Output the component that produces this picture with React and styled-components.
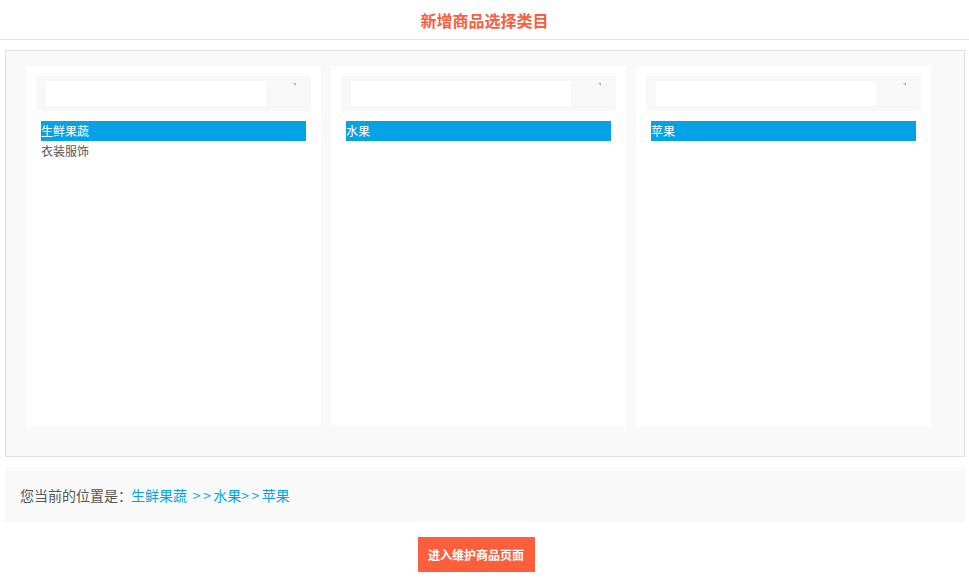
import React, { useState } from "react";
import styled, { createGlobalStyle } from "styled-components";

const GlobalStyle = createGlobalStyle`
  html, body {
    margin: 0;
    padding: 0;
    background: #fff;
    font-family: "Noto Sans CJK SC", "Noto Sans", sans-serif;
  }
`;

const Header = styled.div`
  height: 39px;
  border-bottom: 1px solid #e3e3e3;
  display: flex;
  align-items: center;
  justify-content: center;
`;

const Title = styled.h1`
  margin: 0;
  font-size: 16px;
  font-weight: bold;
  color: #fc5d3d;
`;

const Page = styled.div`
  padding: 10px 4px 0 5px;
`;

const Board = styled.div`
  border: 1px solid #e2e2e2;
  background: #f9f9f9;
  height: 407px;
  box-sizing: border-box;
  padding: 15px 0 0 20px;
  display: flex;
  gap: 10px;
`;

const Column = styled.div`
  width: 295px;
  height: 360px;
  background: #fff;
  padding: 10px;
  box-sizing: border-box;
`;

const SearchBar = styled.div`
  height: 35px;
  background: #f8f8f8;
  display: flex;
  align-items: flex-start;
  padding: 5px 0 0 10px;
  box-sizing: border-box;
  position: relative;
`;

const SearchInput = styled.div`
  width: 220px;
  height: 25px;
  background: #fff;
`;

const Arrow = styled.svg`
  position: absolute;
  left: 257px;
  top: 7px;
`;

const List = styled.ul`
  list-style: none;
  margin: 10px 5px 0;
  padding: 0;
`;

const Item = styled.li`
  height: 20px;
  line-height: 20px;
  font-size: 12px;
  color: ${(p) => (p.$active ? "#fff" : "#555")};
  background: ${(p) => (p.$active ? "#05a3e5" : "transparent")};
  cursor: pointer;
`;

const Location = styled.div`
  margin-top: 10px;
  height: 55px;
  background: #f9f9f9;
  display: flex;
  align-items: center;
  padding-left: 15px;
  font-size: 14px;
  color: #555;
`;

const Path = styled.span`
  color: #05a3e5;
  margin-left: -1px;
`;

const Sep = styled.span`
  letter-spacing: 2.5px;
`;

const Footer = styled.div`
  display: flex;
  justify-content: center;
  padding: 15px 18px 0 0;
`;

const Button = styled.button`
  width: 117px;
  height: 35px;
  border: none;
  background: #fd5f3d;
  color: #fff;
  font-family: inherit;
  font-size: 12px;
  font-weight: bold;
  cursor: pointer;
`;

const columns = [
  ["生鲜果蔬", "衣装服饰"],
  ["水果"],
  ["苹果"],
];

export default function App() {
  const [active] = useState([0, 0, 0]);
  return (
    <>
      <GlobalStyle />
      <Header>
        <Title>新增商品选择类目</Title>
      </Header>
      <Page>
        <Board>
          {columns.map((items, ci) => (
            <Column key={ci}>
              <SearchBar>
                <SearchInput />
                <Arrow width="4" height="4" viewBox="0 0 4 4">
                  <polygon points="0,0 3,0 3,3" fill="#b5b5b5" />
                </Arrow>
              </SearchBar>
              <List>
                {items.map((name, i) => (
                  <Item key={name} $active={active[ci] === i}>
                    {name}
                  </Item>
                ))}
              </List>
            </Column>
          ))}
        </Board>
        <Location>
          您当前的位置是：
          <Path>
            生鲜果蔬<Sep> &gt;&gt;</Sep>水果<Sep>&gt;&gt;</Sep>苹果
          </Path>
        </Location>
        <Footer>
          <Button>进入维护商品页面</Button>
        </Footer>
      </Page>
    </>
  );
}
